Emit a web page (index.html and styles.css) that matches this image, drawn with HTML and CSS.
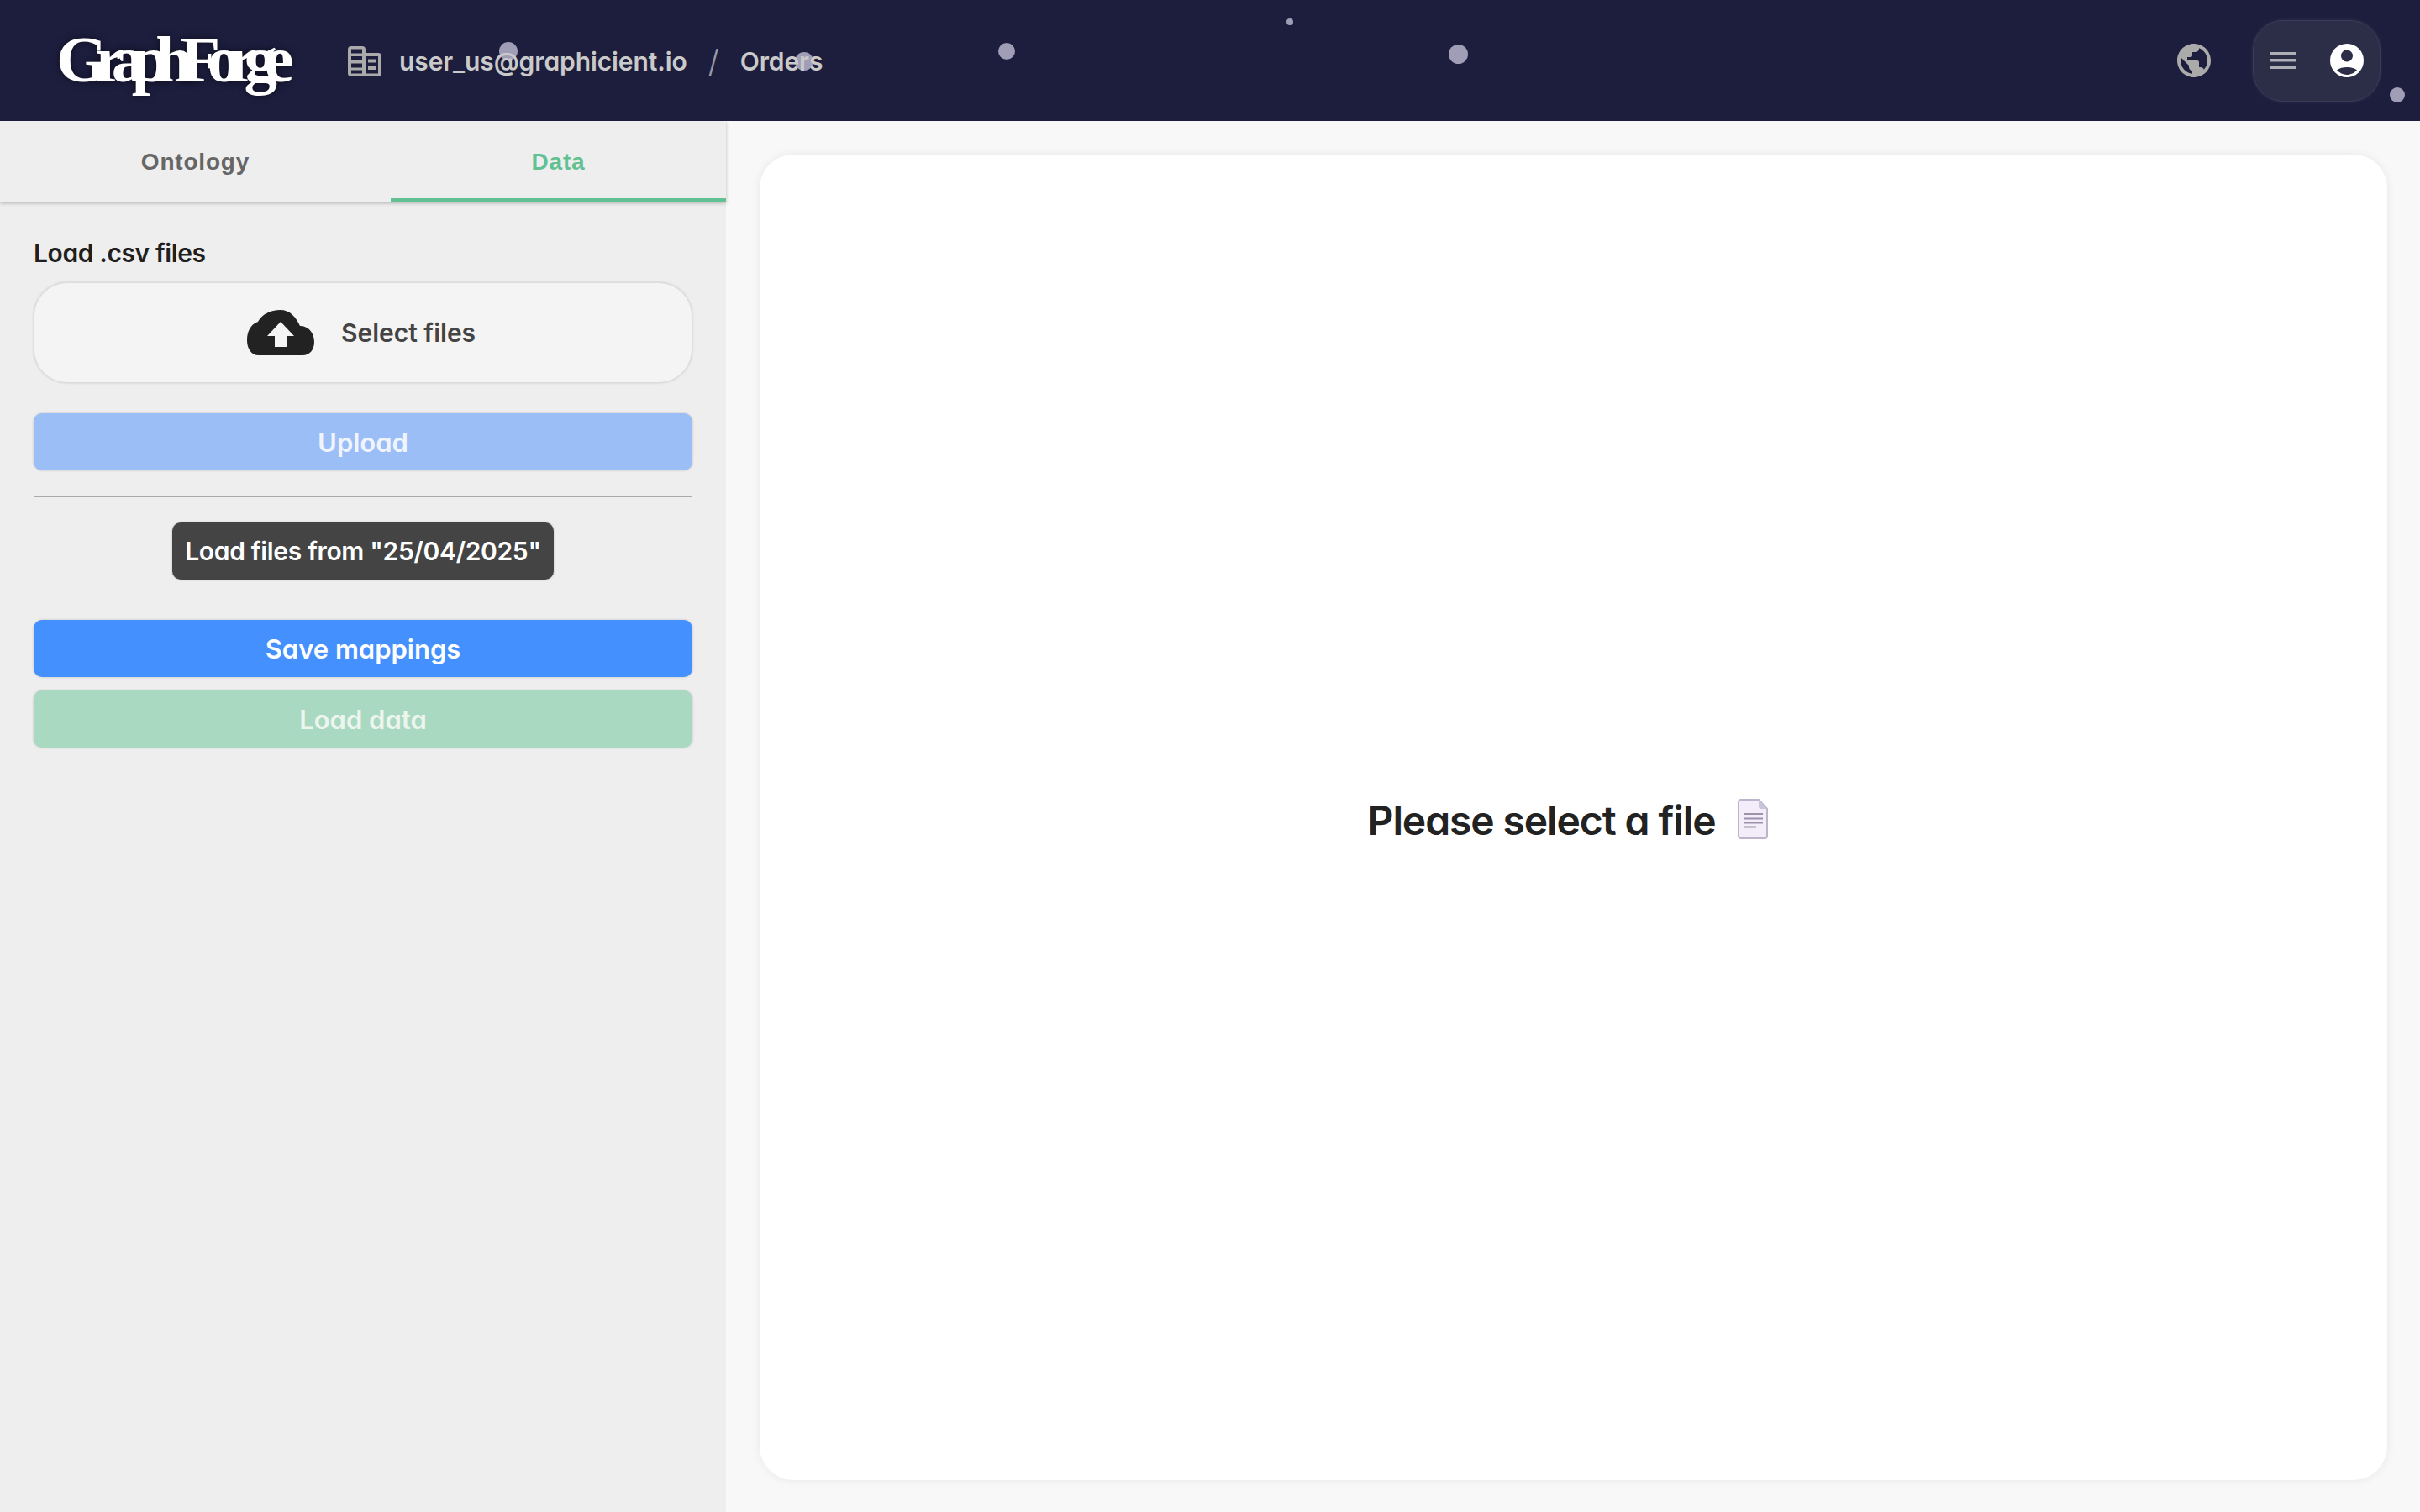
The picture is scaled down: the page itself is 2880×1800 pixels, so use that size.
FILE: index.html
```html
<!DOCTYPE html>
<html lang="en">
<head>
<meta charset="utf-8">
<title>GraphForge</title>
<link rel="stylesheet" href="styles.css">
</head>
<body>
<header class="topbar">
  <span class="particle p1"></span><span class="particle p2"></span><span class="particle p3"></span>
  <span class="particle p4"></span><span class="particle p5"></span><span class="particle p6"></span>
  <div class="logo">GraphForge</div>
  <nav class="crumbs">
    <svg class="org-icon" viewBox="0 0 40 36"><path fill="#aaaaaa" fill-rule="evenodd" d="M4 0h13a4 4 0 0 1 4 4v4h15a4 4 0 0 1 4 4v20a4 4 0 0 1-4 4H4a4 4 0 0 1-4-4V4a4 4 0 0 1 4-4zM4 3.500v5h13v-5zM4 12v5h13v-5zM4 20.500v5h13v-5zM4 28.500v4h13v-4zM21 12v20.500h15V12zM24 15.500h9v4h-9zM24 24h9v4h-9z"/></svg>
    <span class="crumb">user_us@graphicient.io</span>
    <span class="slash">/</span>
    <span class="crumb">Orders</span>
  </nav>
  <div class="top-actions">
    <svg class="globe" viewBox="2 2 20 20"><path fill="#aaaaaa" d="M12 2C6.480 2 2 6.480 2 12s4.480 10 10 10 10-4.480 10-10S17.520 2 12 2zm-1 17.930c-3.950-.490-7-3.850-7-7.930 0-.620.080-1.210.210-1.790L9 15v1c0 1.100.900 2 2 2v1.930zm6.900-2.540c-.260-.810-1-1.390-1.900-1.390h-1v-3c0-.550-.450-1-1-1H8v-2h2c.550 0 1-.450 1-1V7h2c1.100 0 2-.900 2-2v-.410c2.930 1.190 5 4.060 5 7.410 0 2.080-.800 3.970-2.100 5.390z"/></svg>
    <div class="user-pill">
      <svg class="menu" viewBox="0 0 30 20"><path fill="#aeaeb6" d="M0 0h30v3H0zM0 8h30v3.500H0zM0 17h30v3H0z"/></svg>
      <svg class="avatar" viewBox="0 0 40 40"><path fill="#ffffff" fill-rule="evenodd" d="M20 0a20 20 0 1 1 0 40a20 20 0 1 1 0-40zM20 7.500a7 7 0 1 0 0 14a7 7 0 1 0 0-14zM20 28c-4.700 0-9 1.200-12 3.300C11 34.700 15.300 37 20 37s9-2.300 12-5.700C29 29.200 24.700 28 20 28z"/></svg>
    </div>
  </div>
</header>
<div class="workspace">
  <aside class="sidebar">
    <div class="tabs">
      <div class="tab tab-ontology">Ontology</div>
      <div class="tab tab-data">Data</div>
    </div>
    <div class="panel">
      <div class="panel-label">Load .csv files</div>
      <div class="dropzone">
        <svg class="cloud" viewBox="0 0 80 54"><path fill="#222222" fill-rule="evenodd" d="M14 54C5 54 0 46 0 36C0 26 4 17 13 14C18 5 28 0 39.500 0C51 0 58 8 63 19C73 19 80 27 80 38C80 47 75 54 66 54zM40 14L24 31h9v13h14V31h9z"/></svg>
        <span class="dropzone-text">Select files</span>
      </div>
      <button class="btn btn-upload">Upload</button>
      <hr class="divider">
      <div class="recent-row"><span class="recent-chip">Load files from "25/04/2025"</span></div>
      <button class="btn btn-save">Save mappings</button>
      <button class="btn btn-load">Load data</button>
    </div>
  </aside>
  <main class="content">
    <section class="card">
      <h2 class="empty-text">Please select a file</h2>
      <svg class="file-icon" viewBox="0 0 36 48">
        <path fill="#f3edf9" stroke="#bdb5cb" stroke-width="2" d="M4 1h21l10 11v32a3 3 0 0 1-3 3H4a3 3 0 0 1-3-3V4a3 3 0 0 1 3-3z"/>
        <path fill="#c9c3dc" d="M25 1l10 11H28a3 3 0 0 1-3-3z"/>
        <path stroke="#9c92ac" stroke-width="2" d="M7 18h23M7 23.500h23M7 28.500h23M7 33.500h15"/>
      </svg>
    </section>
  </main>
</div>
</body>
</html>
```
FILE: styles.css
```css
* { box-sizing: border-box; }
html, body { margin: 0; padding: 0; height: 100%; }
body {
  width: 2880px;
  height: 1800px;
  overflow: hidden;
  display: flex;
  flex-direction: column;
  background: #f8f8f8;
  font-family: Inter, "Liberation Sans", sans-serif;
  font-feature-settings: "cv11" 1;
}
.topbar {
  position: relative;
  flex: 0 0 144px;
  display: flex;
  align-items: center;
  padding: 0 47px 0 67px;
  background: #1d1e3e;
  color: #cacaca;
}
.particle { position: absolute; border-radius: 50%; background: #a09db7; }
.p1 { left: 594px; top: 50px; width: 22px; height: 22px; }
.p2 { left: 946px; top: 62px; width: 22px; height: 22px; }
.p3 { left: 1188px; top: 51px; width: 20px; height: 20px; }
.p4 { left: 1531px; top: 22px; width: 8px; height: 8px; }
.p5 { left: 1724px; top: 53px; width: 23px; height: 23px; }
.p6 { left: 2844px; top: 104px; width: 18px; height: 18px; }
.logo {
  position: relative;
  width: 347px;
  margin-top: -3px;
  font-family: "Liberation Serif", serif;
  font-feature-settings: normal;
  font-weight: 700;
  font-size: 79px;
  line-height: 76px;
  letter-spacing: -15.400px;
  color: #ffffff;
  text-shadow: 0 0 8px rgba(0, 0, 0, .6);
}
.crumbs { position: relative; display: flex; align-items: center; padding-top: 1px; font-size: 30px; font-weight: 600; letter-spacing: -.1px; }
.org-icon { width: 40px; height: 36px; margin-right: 21px; }
.crumb { white-space: nowrap; }
.slash { margin: 0 25px; font-weight: 300; font-size: 38px; color: #9a9aa5; }
.top-actions { display: flex; align-items: center; margin-left: auto; }
.globe { width: 40px; height: 40px; margin-right: 50px; }
.user-pill {
  width: 152px;
  height: 97px;
  display: flex;
  align-items: center;
  justify-content: space-between;
  padding: 0 19px 0 20px;
  border: 1px solid #3a3b54;
  border-radius: 36px;
  background: #2c2d47;
  box-shadow: 0 0 4px rgba(255, 255, 255, .1);
}
.menu { width: 30px; height: 20px; }
.avatar { width: 40px; height: 40px; }
.workspace { flex: 1; display: flex; min-height: 0; }
.sidebar { flex: 0 0 864px; background: #eeeeee; }
.tabs { display: flex; height: 96px; box-shadow: 0 2px 4px rgba(0, 0, 0, .25); }
.tab {
  display: flex;
  align-items: center;
  justify-content: center;
  font-family: "Liberation Sans", sans-serif;
  font-feature-settings: normal;
  font-weight: 700;
  font-size: 28px;
  letter-spacing: .8px;
  padding-top: 2px;
}
.tab-ontology { flex: 0 0 465px; color: #666666; }
.tab-data { flex: 1; color: #62c192; border-bottom: 4px solid #62c192; padding-top: 6px; }
.panel { display: flex; flex-direction: column; padding: 46px 40px 0; }
.panel-label { height: 50px; line-height: 30px; font-size: 30px; font-weight: 600; letter-spacing: -.4px; color: #1f1f1f; }
.dropzone {
  height: 120px;
  display: flex;
  align-items: center;
  justify-content: center;
  gap: 32px;
  padding-right: 4px;
  border: 1px solid #dcdcdc;
  border-radius: 40px;
  background: #f4f4f4;
  box-shadow: 0 0 3px rgba(0, 0, 0, .15);
}
.cloud { width: 80px; height: 54px; }
.dropzone-text { font-size: 30px; font-weight: 600; color: #444444; }
.btn {
  display: block;
  width: 100%;
  height: 68px;
  padding: 0;
  border: 0;
  border-radius: 10px;
  font-family: inherit;
  font-feature-settings: inherit;
  font-size: 31px;
  font-weight: 600;
  color: #ffffff;
  box-shadow: 0 0 3px rgba(0, 0, 0, .2);
}
.btn-upload { margin-top: 36px; background: #9bbef7; color: #f0f4fd; }
.divider { width: 100%; height: 2px; margin: 30px 0; border: 0; background: #aaaaaa; }
.recent-row { display: flex; justify-content: center; margin-bottom: 48px; }
.recent-chip {
  height: 68px;
  display: flex;
  align-items: center;
  padding: 0 15px;
  border-radius: 10px;
  background: #444444;
  color: #ffffff;
  font-size: 30px;
  font-weight: 600;
  letter-spacing: -.33px;
  white-space: nowrap;
  box-shadow: 0 0 3px rgba(0, 0, 0, .2);
}
.btn-save { background: #4590ff; }
.btn-load { margin-top: 16px; background: #a9d9c0; color: #eef5ef; }
.content { flex: 1; display: flex; padding: 40px 39px 38px 40px; }
.card {
  flex: 1;
  display: flex;
  align-items: center;
  justify-content: center;
  gap: 27px;
  border-radius: 40px;
  background: #ffffff;
  box-shadow: 0 0 12px rgba(0, 0, 0, .07);
  padding-top: 4px;
  padding-right: 13px;
}
.empty-text { margin: 3px 0 0; font-size: 48px; font-weight: 600; letter-spacing: -1.100px; color: #222222; }
.file-icon { width: 36px; height: 48px; }
```
